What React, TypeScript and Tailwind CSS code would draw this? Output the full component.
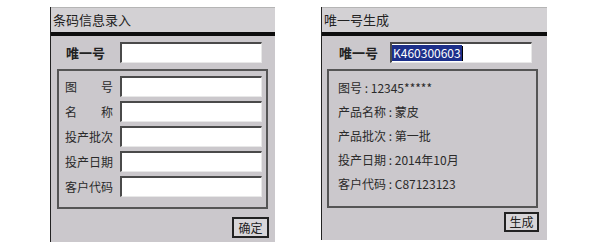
const font = { fontFamily: '"Noto Sans CJK SC", "Noto Sans", sans-serif' }

function Field({ className = '', children }: { className?: string; children?: React.ReactNode }) {
  return (
    <div className={`h-[21px] bg-white border-t-2 border-l-2 border-t-[#4a4a4a] border-l-[#4a4a4a] border-b border-r border-b-[#e8e8e8] border-r-[#e8e8e8] flex items-center ${className}`}>
      {children}
    </div>
  )
}

function TitleBar({ title }: { title: string }) {
  return (
    <>
      <div className="h-[25px] bg-[#d3d1d4] border-t border-[#b5b5b5] flex items-center pl-[2px] text-[13px] text-[#222]">{title}</div>
      <div className="h-[4px] bg-[#0d0d0d]" />
    </>
  )
}

function Button({ label, className = '' }: { label: string; className?: string }) {
  return (
    <div className={`border-2 border-[#222] bg-[#d8d6d9] flex items-center justify-center text-[12px] text-[#222] ${className}`}>{label}</div>
  )
}

export default function App() {
  const rows = [['图', '号'], ['名', '称'], ['投产批次'], ['投产日期'], ['客户代码']]
  const info = [['图号', '12345*****'], ['产品名称', '蒙皮'], ['产品批次', '第一批'], ['投产日期', '2014年10月'], ['客户代码', 'C87123123']]
  return (
    <div className="w-[600px] h-[250px] bg-white flex pt-[7px] pl-[50px] gap-[46px]" style={font}>
      {/* left dialog */}
      <div className="w-[225px] h-[235px] bg-[#cbc8cc] border-l border-[#222] flex flex-col">
        <TitleBar title="条码信息录入" />
        <div className="flex items-center mt-[6px] h-[21px]">
          <span className="w-[69px] pl-[15px] text-[13px] font-bold text-[#222]">唯一号</span>
          <Field className="w-[142px]" />
        </div>
        <div className="ml-[6px] mt-[6px] w-[211px] h-[140px] border-2 border-[#555] flex flex-col gap-[4px] pt-[5px]">
          {rows.map((r, i) => (
            <div key={i} className="flex items-center">
              <span className="w-[61px] pl-[6px] text-[12px] text-[#2a2a2a] flex justify-between pr-[7px]">
                {r.length === 2 ? (<><span>{r[0]}</span><span>{r[1]}</span></>) : <span>{r[0]}</span>}
              </span>
              <Field className="w-[142px]" />
            </div>
          ))}
        </div>
        <div className="flex justify-end pr-[6px] mt-[8px]">
          <Button label="确定" className="w-[37px] h-[21px]" />
        </div>
      </div>

      {/* right dialog */}
      <div className="w-[226px] h-[233px] bg-[#cbc8cc] border-l border-[#222] flex flex-col">
        <TitleBar title="唯一号生成" />
        <div className="flex items-center mt-[6px] h-[21px]">
          <span className="w-[68px] pl-[17px] text-[13px] font-bold text-[#222]">唯一号</span>
          <Field className="w-[142px]">
            <span className="bg-[#1c2f8a] text-white text-[12px] leading-[16px] px-[1px]">K460300603</span>
            <span className="w-px h-[15px] bg-black" />
          </Field>
        </div>
        <div className="ml-[5px] mt-[6px] w-[211px] h-[139px] border-2 border-[#555] flex flex-col gap-[6px] pt-[8px] pl-[9px]">
          {info.map(([k, v], i) => (
            <div key={i} className="h-[18px] flex items-center text-[12px] text-[#2a2a2a] whitespace-pre">{k} : {v}</div>
          ))}
        </div>
        <div className="flex justify-end pr-[8px] mt-[4px]">
          <Button label="生成" className="w-[35px] h-[20px]" />
        </div>
      </div>
    </div>
  )
}
